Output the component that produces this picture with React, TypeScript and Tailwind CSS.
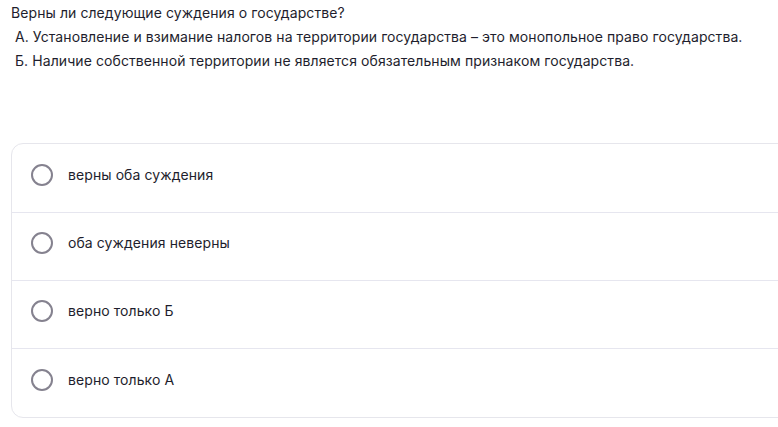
const OPTIONS = [
  'верны оба суждения',
  'оба суждения неверны',
  'верно только Б',
  'верно только А',
];

export default function App() {
  return (
    <div className="min-h-screen bg-white text-[14px] leading-6 tracking-[0.08px] text-[#1e1e2d] font-['Inter',sans-serif]">
      <div className="pl-[11px] pt-[1px]">
        <p>Верны ли следующие суждения о государстве?</p>
        <p className="pl-1">А. Установление и взимание налогов на территории государства – это монопольное право государства.</p>
        <p className="pl-1">Б. Наличие собственной территории не является обязательным признаком государства.</p>
      </div>
      <div className="ml-[11px] mt-[70px] w-[790px] rounded-xl border border-[#e6e6ec]">
        {OPTIONS.map((o, i) => (
          <label
            key={o}
            className={`flex items-center gap-[15px] pl-[19px] pb-[7px] cursor-pointer ${
              i === 0 ? 'h-[69px]' : 'h-[68px]'
            } ${i < OPTIONS.length - 1 ? 'border-b border-[#e6e6ef]' : ''}`}
          >
            <span className="h-[22px] w-[22px] rounded-full border-2 border-[#85828f]" />
            <span>{o}</span>
          </label>
        ))}
      </div>
    </div>
  );
}
